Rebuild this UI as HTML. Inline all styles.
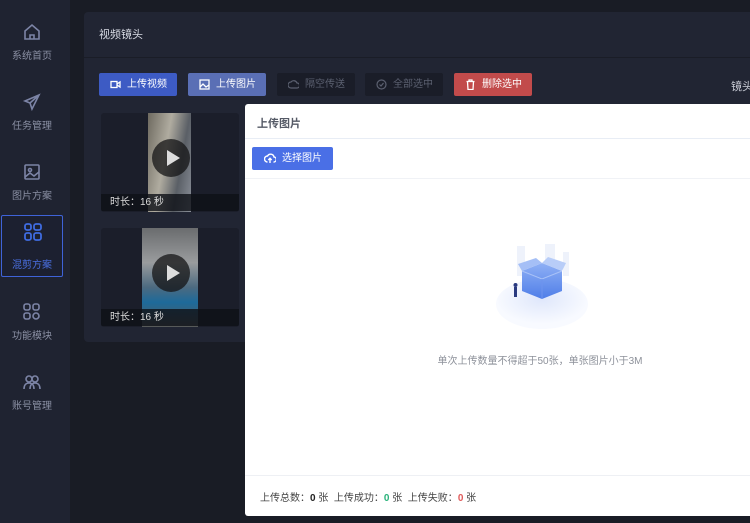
<!DOCTYPE html>
<html><head><meta charset="utf-8"><style>
*{margin:0;padding:0;box-sizing:border-box}
body{width:750px;height:523px;overflow:hidden;background:#191c25;font-family:"Liberation Sans","Noto Sans CJK SC",sans-serif;position:relative}
.side{position:absolute;left:0;top:0;width:70px;height:523px;background:#1f2331}
.item{position:absolute;left:1px;width:62px;height:62px;text-align:center;color:#8a8fa3;font-size:10px}
.item svg{position:absolute;left:21px;top:6px}
.item span{position:absolute;left:0;right:0;top:31px}
.item.act{border:1px solid #3f63d8;border-radius:2px;color:#4a6fe0;background:#1c2030}
.panel{position:absolute;left:84px;top:12px;width:680px;height:330px;background:#212533;border-radius:4px}
.hdr{position:absolute;left:99px;top:26px;color:#d8dbe4;font-size:11px}
.hline{position:absolute;left:84px;top:57px;width:666px;height:1px;background:#1a1d27}
.btn{position:absolute;top:73px;height:23px;border-radius:2px;font-size:10px;line-height:23px;color:#fff;padding-left:28px;white-space:nowrap}
.btn svg{position:absolute;left:11px;top:6px}
.card{position:absolute;left:101px;width:138px;height:99px;background:#1b1e2a;border-radius:3px;overflow:hidden}
.thumb{position:absolute;top:0;height:99px}
.play{position:absolute;width:38px;height:38px;border-radius:50%;background:rgba(20,20,22,.75)}
.play:after{content:"";position:absolute;left:15px;top:11px;border-left:13px solid #ddd;border-top:8px solid transparent;border-bottom:8px solid transparent}
.cap{position:absolute;left:0;bottom:1px;width:100%;height:17px;background:rgba(14,16,22,.8);color:#ddd;font-size:10px;line-height:17px;padding-left:9px}
.modal{position:absolute;left:245px;top:104px;width:590px;height:412px;background:#fff;border-radius:3px}
</style></head><body>
<div class="side">
<div class="item" style="top:16px"><svg width="20" height="20" viewBox="0 0 20 20" fill="none" stroke="#7c84a6" stroke-width="1.6"><path d="M3 9L10 3l7 6v8H3z"/><path d="M8 17v-4h4v4"/></svg><span>系统首页</span></div>
<div class="item" style="top:86px"><svg width="20" height="20" viewBox="0 0 20 20" fill="none" stroke="#7c84a6" stroke-width="1.6"><path d="M17 3L3 9l5 2 2 6 7-14z"/><path d="M8 11l9-8"/></svg><span>任务管理</span></div>
<div class="item" style="top:156px"><svg width="20" height="20" viewBox="0 0 20 20" fill="none" stroke="#7c84a6" stroke-width="1.6"><rect x="3" y="3" width="14" height="14" rx="1"/><circle cx="8" cy="8" r="1.5"/><path d="M3 15l5-4 4 3 5-4"/></svg><span>图片方案</span></div>
<div class="item act" style="top:215px"><svg width="20" height="20" viewBox="0 0 20 20" fill="none" stroke="#3f6be0" stroke-width="1.8"><rect x="2" y="2" width="6" height="6" rx="2"/><rect x="11" y="2" width="7" height="6" rx="2"/><rect x="2" y="11" width="6" height="7" rx="2"/><rect x="11" y="11" width="7" height="7" rx="2"/></svg><span style="top:40px">混剪方案</span></div>
<div class="item" style="top:296px"><svg width="20" height="20" viewBox="0 0 20 20" fill="none" stroke="#7c84a6" stroke-width="1.6"><rect x="2" y="2" width="6" height="6" rx="2"/><rect x="11" y="2" width="6" height="6" rx="2"/><rect x="2" y="11" width="6" height="6" rx="2"/><circle cx="14" cy="14" r="3"/></svg><span>功能模块</span></div>
<div class="item" style="top:366px"><svg width="20" height="20" viewBox="0 0 20 20" fill="none" stroke="#7c84a6" stroke-width="1.6"><circle cx="7" cy="7" r="3"/><circle cx="13" cy="7" r="3"/><path d="M2 17c0-4 2-6 5-6s5 2 5 6M8 17c0-4 2-6 5-6s5 2 5 6"/></svg><span>账号管理</span></div>
</div>
<div class="panel"></div>
<div class="hdr">视频镜头</div>
<div class="hline"></div>
<div class="btn" style="left:99px;width:78px;background:#3d5bc4"><svg width="11" height="11" viewBox="0 0 11 11" fill="none" stroke="#fff" stroke-width="1.3"><rect x="1" y="2.5" width="6" height="6"/><path d="M7 5l3-2v5l-3-2"/></svg>上传视频</div>
<div class="btn" style="left:188px;width:78px;background:#5a6fb5"><svg width="11" height="11" viewBox="0 0 11 11" fill="none" stroke="#fff" stroke-width="1.3"><rect x="1" y="1" width="9" height="9"/><path d="M1 8l3-3 3 3 3-2"/></svg>上传图片</div>
<div class="btn" style="left:277px;width:78px;background:#1a1d28;color:#5b6070"><svg width="11" height="11" viewBox="0 0 11 11" fill="none" stroke="#5b6070" stroke-width="1.2"><path d="M3 9a3 3 0 0 1 0-6 3.5 3.5 0 0 1 6 1 2.5 2.5 0 0 1 0 5z"/></svg>隔空传送</div>
<div class="btn" style="left:365px;width:78px;background:#1a1d28;color:#5b6070"><svg width="11" height="11" viewBox="0 0 11 11" fill="none" stroke="#5b6070" stroke-width="1.2"><circle cx="5.5" cy="5.5" r="4.5"/><path d="M3.5 5.5l1.5 1.5 2.5-3"/></svg>全部选中</div>
<div class="btn" style="left:454px;width:78px;background:#c24b4b"><svg width="11" height="11" viewBox="0 0 11 11" fill="none" stroke="#fff" stroke-width="1.3"><path d="M1.5 2.5h8M4 2.5V1h3v1.5M2.5 2.5l.5 8h5l.5-8"/></svg>删除选中</div>
<div style="position:absolute;left:731px;top:78px;color:#c9ccd6;font-size:11px;white-space:nowrap">镜头</div>
<div class="card" style="top:113px"><div class="thumb" style="left:47px;width:43px;background:linear-gradient(100deg,#6e6a60,#b0aca0 40%,#5a5f66 70%,#8a8f98)"></div><div class="play" style="left:51px;top:26px"></div><div class="cap">时长：16 秒</div></div>
<div class="card" style="top:228px"><div class="thumb" style="left:41px;width:56px;background:linear-gradient(180deg,#6a6c6e,#9a9c9e 35%,#4c6a80 60%,#1d6a9a 75%,#585a58)"></div><div class="play" style="left:51px;top:26px"></div><div class="cap">时长：16 秒</div></div>
<div class="modal">
<div style="position:absolute;left:12px;top:11px;font-size:11px;color:#555a66;font-weight:bold">上传图片</div>
<div style="position:absolute;left:0;top:34px;width:100%;height:1px;background:#e8edf5"></div>
<div style="position:absolute;left:7px;top:43px;width:81px;height:23px;background:#4a6fe6;border-radius:2px;color:#fff;font-size:10px;line-height:23px;padding-left:30px"><svg style="position:absolute;left:12px;top:6px" width="12" height="11" viewBox="0 0 12 11" fill="none" stroke="#fff" stroke-width="1.4"><path d="M3.5 9a3 3 0 0 1 0-6 3.5 3.5 0 0 1 6.5 1 2.5 2.5 0 0 1-.5 5"/><path d="M6 10V5.5M4.3 7L6 5.3 7.7 7"/></svg>选择图片</div>
<div style="position:absolute;left:0;top:74px;width:100%;height:1px;background:#f0f2f6"></div>
<svg style="position:absolute;left:250px;top:140px" width="94" height="86" viewBox="0 0 94 86">
<defs><radialGradient id="g" cx="50%" cy="40%"><stop offset="0" stop-color="#dfe7fb"/><stop offset="1" stop-color="#f8faff"/></radialGradient><linearGradient id="b" x1="0" y1="0" x2="0" y2="1"><stop offset="0" stop-color="#8fb0f5"/><stop offset="1" stop-color="#4f7ee8"/></linearGradient></defs>
<ellipse cx="47" cy="60" rx="46" ry="25" fill="url(#g)"/>
<rect x="22" y="2" width="8" height="30" fill="#eef2fb"/><rect x="50" y="0" width="10" height="32" fill="#eef2fb"/><rect x="68" y="8" width="6" height="24" fill="#eef2fb"/>
<path d="M27 27l20-8 20 8v20l-20 8-20-8z" fill="url(#b)"/><path d="M27 27l20 8 20-8" fill="none" stroke="#a9c2f7"/><path d="M47 35v20" stroke="#6d93ee"/>
<path d="M47 19l6-6 18 6-4 8z" fill="#b8cdf8"/><path d="M27 27l-4-7 18-6 6 5z" fill="#a5bff6"/>
<rect x="19" y="43" width="3" height="10" fill="#2a3a80"/><circle cx="20.5" cy="41" r="2" fill="#2a3a80"/>
</svg>
<div style="position:absolute;left:0;width:100%;top:248px;text-align:center;font-size:10px;color:#8d919a">单次上传数量不得超于50张，单张图片小于3M</div>
<div style="position:absolute;left:0;top:371px;width:100%;height:1px;background:#eef0f4"></div>
<div style="position:absolute;left:15px;top:385px;font-size:10px;color:#444;white-space:nowrap">上传总数：<b style="color:#222">0</b> 张&nbsp; 上传成功：<b style="color:#29b27a">0</b> 张&nbsp; 上传失败：<b style="color:#e05a5a">0</b> 张</div>
</div>
</body></html>
